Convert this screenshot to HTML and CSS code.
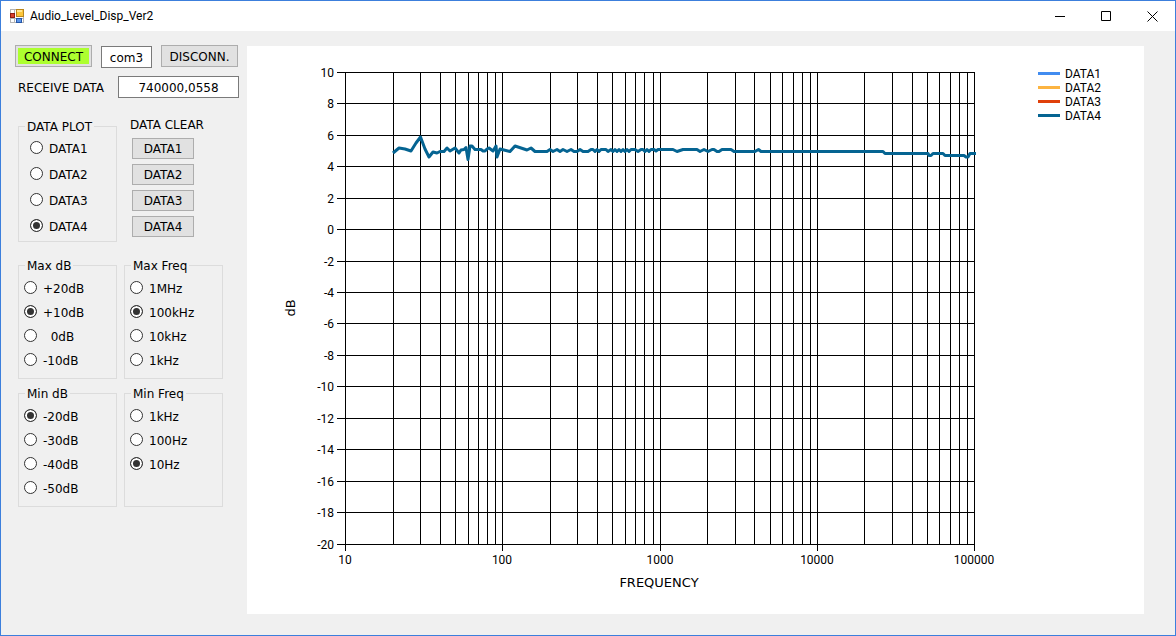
FILE: index.html
```html
<!DOCTYPE html>
<html lang="en">
  <head>
    <meta charset="utf-8">
    <title>Audio_Level_Disp_Ver2</title>
    <link rel="stylesheet" href="styles.css">
  </head>
  <body>
    <header class="titlebar">
      <svg class="app-icon" width="14" height="14" viewBox="0 0 14 14">
        <rect x="0.5" y="0.5" width="13" height="13" fill="#fff" stroke="#b4b4b4" />
        <path d="M4.5 0v14M9.5 9v5M0 9.5h14" stroke="#b4b4b4" />
        <rect x="6.5" y="0.5" width="7" height="7" fill="#fcc63a" stroke="#b9861c" />
        <rect x="7" y="1" width="5" height="2" fill="#ffe591" />
        <rect x="0.5" y="4.5" width="4" height="4" fill="#d8402c" stroke="#8e1c12" />
        <rect x="6.5" y="9.5" width="5" height="4" fill="#5a94e8" stroke="#2456a8" />
      </svg>
      <h1>Audio_Level_Disp_Ver2</h1>
      <div class="window-buttons">
        <button aria-label="Minimize">
          <svg width="11" height="11"><path d="M0 5.5h10" /></svg>
        </button>
        <button aria-label="Maximize">
          <svg width="11" height="11"><path d="M0.5 0.5h9v9h-9z" /></svg>
        </button>
        <button aria-label="Close">
          <svg width="11" height="11"><path d="M0.5 0.5l10 10M10.5 0.5l-10 10" /></svg>
        </button>
      </div>
    </header>

    <main>
      <div class="controls">
        <div class="row port">
          <button class="btn connect"><span>CONNECT</span></button>
          <input class="com" type="text" value="com3" aria-label="Port">
          <button class="btn">DISCONN.</button>
        </div>
        <div class="row receive">
          <label for="receive">RECEIVE DATA</label>
          <input id="receive" type="text" value="740000,0558">
        </div>

        <div class="row groups data">
          <fieldset>
            <legend>DATA PLOT</legend>
            <div class="options">
              <label><input type="radio" name="plot">DATA1</label>
              <label><input type="radio" name="plot">DATA2</label>
              <label><input type="radio" name="plot">DATA3</label>
              <label><input type="radio" name="plot" checked>DATA4</label>
            </div>
          </fieldset>
          <div class="clear">
            <h2>DATA CLEAR</h2>
            <button class="btn">DATA1</button>
            <button class="btn">DATA2</button>
            <button class="btn">DATA3</button>
            <button class="btn">DATA4</button>
          </div>
        </div>

        <div class="row groups">
          <fieldset>
            <legend>Max dB</legend>
            <div class="options">
              <label><input type="radio" name="maxdb">+20dB</label>
              <label><input type="radio" name="maxdb" checked>+10dB</label>
              <label><input type="radio" name="maxdb">&nbsp;&nbsp;0dB</label>
              <label><input type="radio" name="maxdb">-10dB</label>
            </div>
          </fieldset>
          <fieldset>
            <legend>Max Freq</legend>
            <div class="options">
              <label><input type="radio" name="maxfreq">1MHz</label>
              <label><input type="radio" name="maxfreq" checked>100kHz</label>
              <label><input type="radio" name="maxfreq">10kHz</label>
              <label><input type="radio" name="maxfreq">1kHz</label>
            </div>
          </fieldset>
        </div>

        <div class="row groups">
          <fieldset>
            <legend>Min dB</legend>
            <div class="options">
              <label><input type="radio" name="mindb" checked>-20dB</label>
              <label><input type="radio" name="mindb">-30dB</label>
              <label><input type="radio" name="mindb">-40dB</label>
              <label><input type="radio" name="mindb">-50dB</label>
            </div>
          </fieldset>
          <fieldset>
            <legend>Min Freq</legend>
            <div class="options">
              <label><input type="radio" name="minfreq">1kHz</label>
              <label><input type="radio" name="minfreq">100Hz</label>
              <label><input type="radio" name="minfreq" checked>10Hz</label>
            </div>
          </fieldset>
        </div>
      </div>

      <div class="chart">
        <svg id="chart" viewBox="0 0 897 568"></svg>
      </div>
    </main>

    <script src="chart.js"></script>
  </body>
</html>
```
FILE: styles.css
```css
* {
  box-sizing: border-box;
}
body {
  margin: 0;
  min-height: 100vh;
  border: 1px solid #3c7fdc;
  background-color: #f0f0f0;
  color: #000;
  font-family: "DejaVu Sans", Verdana, sans-serif;
  font-size: 12px;
  line-height: 14px;
}
h1,
h2 {
  margin: 0;
  font-size: 12px;
  font-weight: normal;
}
button,
input {
  font: inherit;
  color: inherit;
}

/* title bar */
.titlebar {
  display: flex;
  align-items: center;
  height: 30px;
  padding-left: 9px;
  background-color: #fff;
}
.titlebar h1 {
  margin-left: 6px;
  font-family: Roboto, sans-serif;
}
.window-buttons {
  display: flex;
  margin-left: auto;
}
.window-buttons button {
  display: flex;
  justify-content: center;
  align-items: center;
  width: 46px;
  height: 30px;
  padding: 0;
  border: none;
  background: none;
}
.window-buttons path {
  fill: none;
  stroke: #000;
}

main {
  display: flex;
  align-items: flex-start;
}

/* left side */
.controls {
  flex: none;
  width: 246px;
  padding: 14px 8px 14px 14px;
}
.row {
  display: flex;
}
.port {
  gap: 9px;
  align-items: flex-start;
}
.btn {
  width: 77px;
  height: 22px;
  padding: 1px 0 0;
  border: 1px solid #adadad;
  background-color: #e1e1e1;
  text-align: center;
}
.connect {
  padding: 2px;
}
.connect span {
  display: block;
  padding-top: 2px;
  background-color: #adff2f;
}
input[type="text"] {
  height: 22px;
  padding: 1px 0 0;
  border: 1px solid #7a7a7a;
  background-color: #fff;
  text-align: center;
}
.com {
  width: 51px;
  margin-top: 1px;
}
.receive {
  align-items: center;
  justify-content: space-between;
  margin: 8px 0 20px;
  padding-left: 3px;
}
.receive label {
  padding-top: 1px;
}
#receive {
  width: 121px;
}
.groups {
  gap: 7px;
  margin-bottom: 6px;
  padding-left: 3px;
}
.data {
  margin-bottom: 15px;
}
fieldset {
  width: 99px;
  min-width: 0;
  margin: 0;
  padding: 0;
  border: 1px solid #dcdcdc;
}
legend {
  margin-left: 6px;
  padding: 2px 2px 0;
}
.options {
  padding: 3px 0 6px 5px;
}
.options label {
  display: flex;
  align-items: flex-start;
  gap: 6px;
  height: 24px;
  padding-top: 5px;
  line-height: 16px;
}
.data .options {
  padding: 1px 0 2px 11px;
}
.data .options label {
  height: 26px;
  padding-top: 6px;
}
input[type="radio"] {
  appearance: none;
  width: 13px;
  height: 13px;
  margin: 0;
  border: 1px solid #333;
  border-radius: 50%;
  background-color: #fff;
}
input[type="radio"]:checked {
  background-color: #333;
  box-shadow: inset 0 0 0 2px #fff;
}
.clear {
  display: flex;
  flex-direction: column;
  gap: 5px;
  padding: 1px 0 0 8px;
}
.clear h2 {
  margin: 0 0 2px -2px;
  line-height: 12px;
}
.clear .btn {
  width: 62px;
  height: 21px;
  padding: 0;
}

/* chart */
.chart {
  flex: 1;
  min-width: 0;
  margin: 15px 31px 21px 0;
  background-color: #fff;
}
.chart svg {
  display: block;
  width: 100%;
}
.chart text {
  font-family: Roboto, sans-serif;
  font-size: 12px;
}
.chart .axis-title {
  font-family: "DejaVu Sans", Verdana, sans-serif;
  font-size: 13px;
  text-anchor: middle;
}
.chart .x-label {
  text-anchor: middle;
}
.chart .y-label {
  text-anchor: end;
}
.grid {
  stroke: #000;
  shape-rendering: crispEdges;
}
.level {
  fill: none;
  stroke: #056492;
  stroke-width: 3;
  stroke-linejoin: round;
}
```
FILE: chart.js
```js
const svg = document.getElementById("chart");

// plot area
const left = 98;
const top_ = 26;
const bottom = 498;
const right = 727;
const decade = 157.25;

const legend = [
  ["DATA1", "#418cf0"],
  ["DATA2", "#fcb441"],
  ["DATA3", "#e0400a"],
  ["DATA4", "#056492"],
];

const data4 = [
  [146, 107], [152, 102], [158, 103], [164, 105], [169, 97], [173.5, 91],
  [178, 103], [182, 111], [186, 106], [190, 107], [193, 105.5], [197, 105.5],
  [200, 102], [203, 105], [208, 102], [212, 107], [214, 104], [217, 103.5],
  [219, 101.5], [221, 113.5], [223, 100], [225, 100], [228, 103.5],
  [234, 103.5], [236, 105], [238, 105], [240, 103], [242, 102], [246, 105],
  [249, 100], [250, 111], [253, 103], [255, 103.5], [263, 105.5],
  [268, 100], [280, 104], [284, 102], [288, 105.5], [300, 105.5],
  [303, 103.5], [306, 105.5], [310, 103.5], [313, 105.5], [316, 103.5],
  [320, 105.5], [324, 103.5], [327, 105.5], [330, 105.5], [333, 103.5],
  [336, 105.5], [341, 105.5], [344, 103.5], [346, 103.5], [348, 105.5],
  [350, 103.5], [352, 105.5], [354, 103.5], [359, 103.5], [361, 105.5],
  [364, 103.5], [366, 105.5], [368, 103.5], [370, 105.5], [372, 103.5],
  [374, 105.5], [376, 103.5], [378, 105.5], [380, 103.5], [382, 105.5],
  [384, 103.5], [388, 103.5], [391, 105.5], [394, 103.5], [396, 103.5],
  [398, 105.5], [400, 103.5], [402, 105.5], [404, 103.5], [407, 103.5],
  [409, 105], [411, 103.5], [426, 103.5], [430, 105.5], [436, 103.5],
  [450, 103.5], [453, 105.5], [457, 103.5], [461, 105.5], [465, 103.5],
  [467, 103.5], [470, 105.5], [472, 105.5], [475, 103.5], [484, 103.5],
  [487, 105.5], [508, 105.5], [511.5, 103.5], [514, 105.5], [636, 105.5],
  [638, 107.5], [681, 107.5], [682, 109.5], [684, 109.5], [686, 107.5],
  [696, 107.5], [698, 109.5], [717, 109.5], [719, 111], [721, 111],
  [723, 107.5], [729, 107.5],
];

function add(name, attrs, text) {
  const el = document.createElementNS("http://www.w3.org/2000/svg", name);
  for (const key in attrs) {
    el.setAttribute(key, attrs[key]);
  }
  if (text !== undefined) {
    el.textContent = text;
  }
  svg.appendChild(el);
}

function drawGrid() {
  let d = "";
  for (let i = 0; i <= 15; i++) {
    const y = Math.round(top_ + ((bottom - top_) * i) / 15 - 0.3);
    d += `M${left - 8} ${y + 0.5}H${right + 1}`;
    add("text", { class: "y-label", x: 87, y: y + 5 }, 10 - i * 2);
  }
  for (let p = 0; p <= 4; p++) {
    for (let n = 1; n <= 9; n++) {
      const x = Math.round(left + 0.2 + decade * (p + Math.log10(n)));
      d += `M${x + 0.5} ${top_}V${n === 1 ? bottom + 7 : bottom}`;
      if (n === 1) {
        add("text", { class: "x-label", x: x, y: 518 }, 10 ** (p + 1));
      }
      if (p === 4) break;
    }
  }
  add("path", { class: "grid", d: d });
}

function drawLegend() {
  legend.forEach(([name, color], i) => {
    const y = 26 + i * 14;
    add("rect", { x: 791, y: y, width: 22, height: 3, fill: color });
    add("text", { x: 818, y: y + 6 }, name);
  });
}

drawGrid();
add("polyline", { class: "level", points: data4.join(" ") });
drawLegend();
add("text", { class: "axis-title", x: 412, y: 541 }, "FREQUENCY");
add("text", { class: "axis-title", transform: "translate(48 262) rotate(-90)" }, "dB");
```
